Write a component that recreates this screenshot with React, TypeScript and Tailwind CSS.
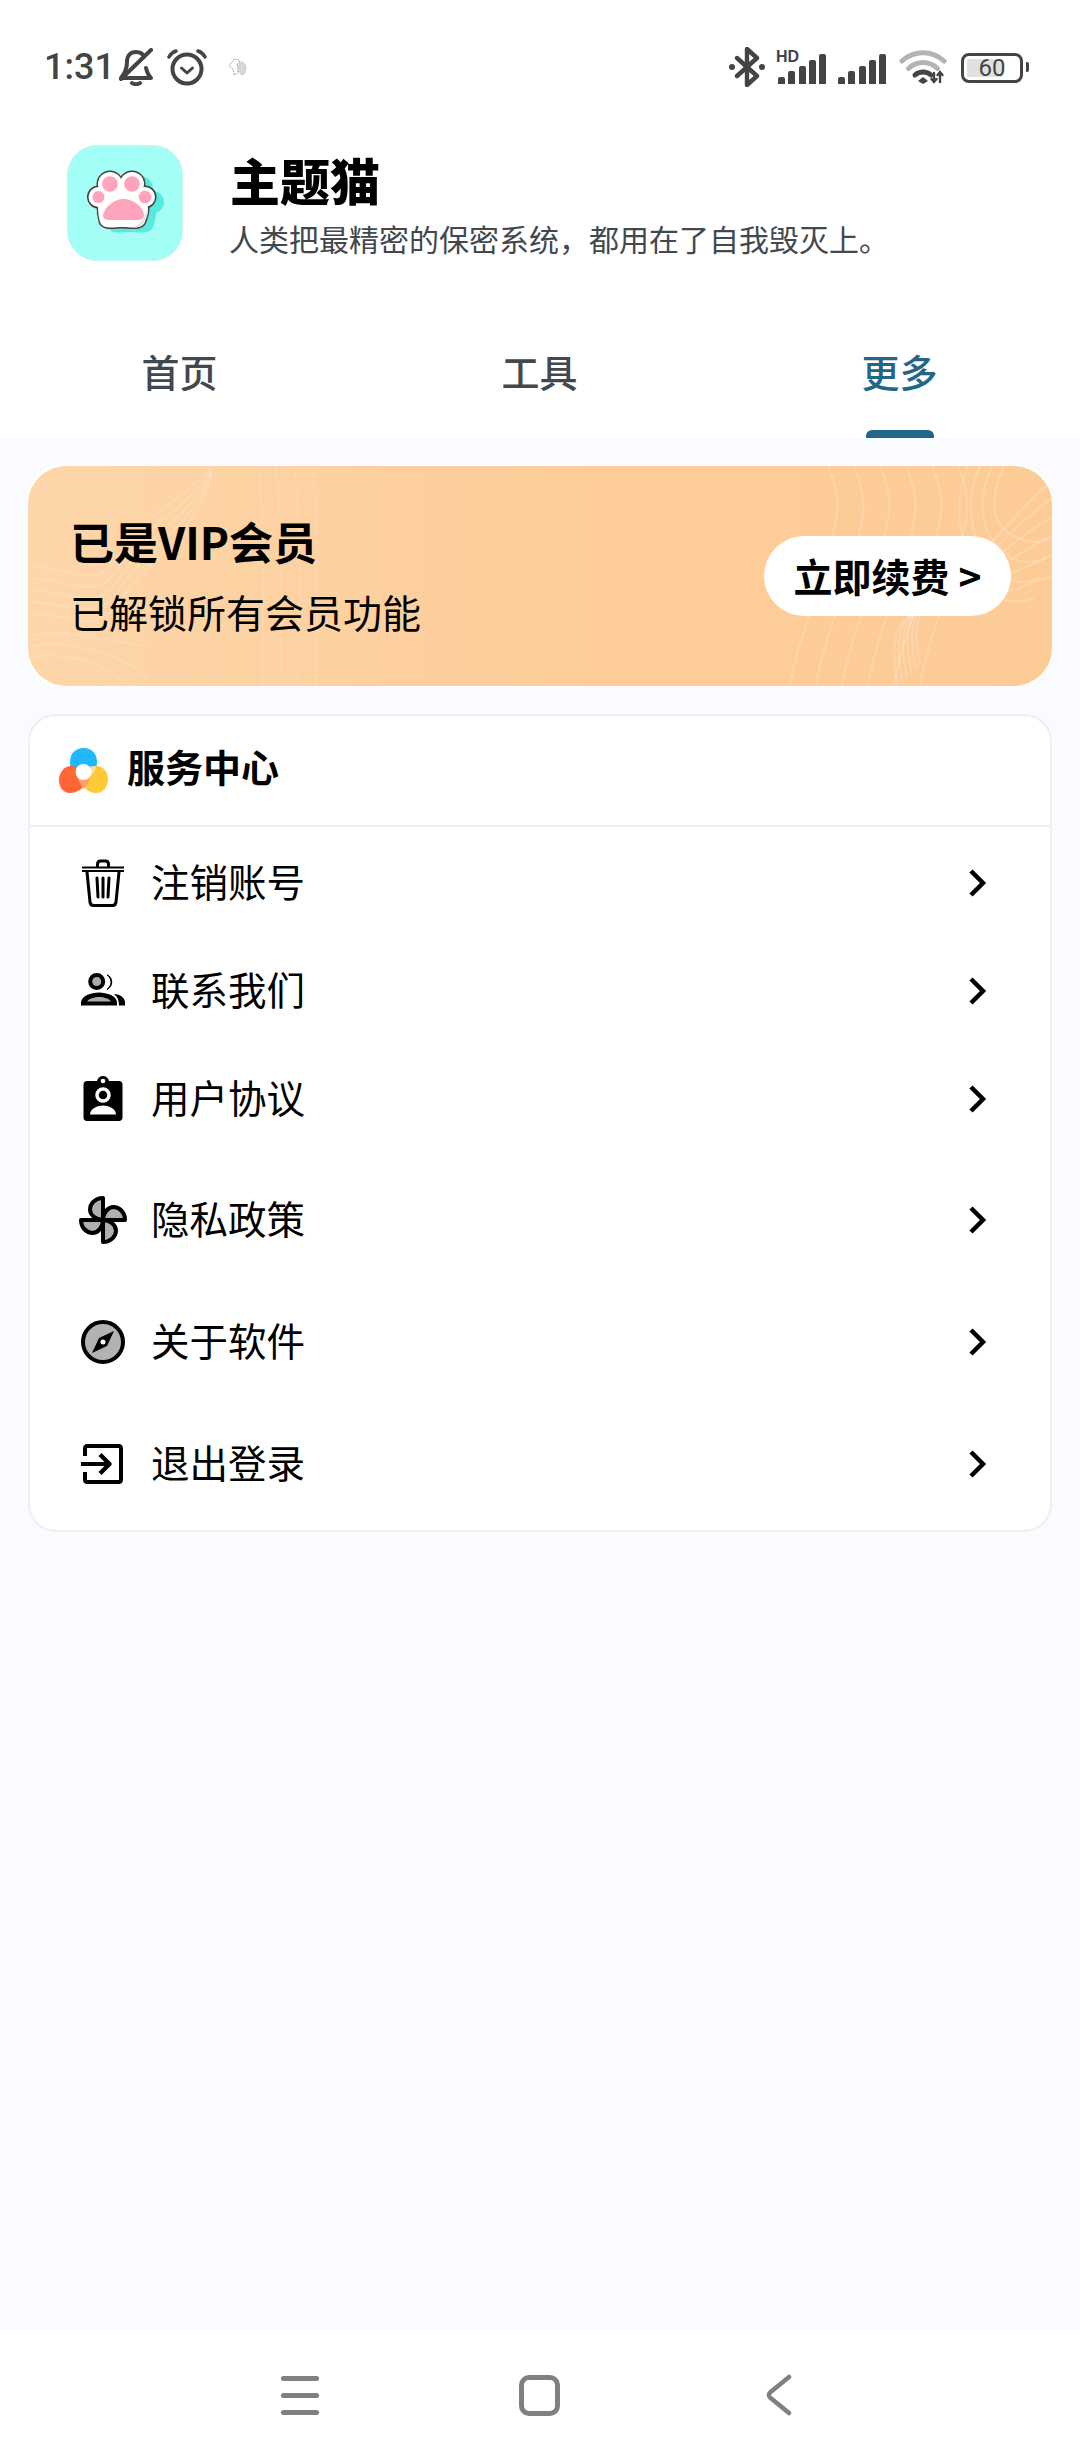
import React from 'react';

const CJK = '[font-family:"Noto_Sans_CJK_SC","Noto_Sans",sans-serif]';

const Signal = () => (
  <div className="h-[30px] w-[48px] flex items-end justify-between">
    {['h-[7px]', 'h-[13px]', 'h-[18px]', 'h-[24px]', 'h-[30px]'].map((h) => (
      <div key={h} className={`${h} w-[7px] bg-[#444] rounded-t-[2px]`} />
    ))}
  </div>
);

const StatusIcons = () => (
  <div className="flex items-center">
    {/* bluetooth */}
    <svg width="36" height="40" viewBox="0 0 36 40" fill="none" stroke="#444" strokeWidth="4.400" strokeLinecap="round" strokeLinejoin="round">
      <path d="M8 11l20 18-10 9V2l10 9L8 29" />
      <circle cx="3" cy="20" r="3" fill="#444" stroke="none" />
      <circle cx="33" cy="20" r="3" fill="#444" stroke="none" />
    </svg>
    <div className="relative w-[48px] h-[30px] ml-[13px] mt-[3px]">
      <span className="absolute left-[-2px] top-[-4px] text-[16px] leading-[14px] font-bold text-[#444] font-['Liberation_Sans',sans-serif]">HD</span>
      <Signal />
    </div>
    <div className="w-[48px] h-[30px] ml-[12px] mt-[3px]">
      <Signal />
    </div>
    {/* wifi */}
    <svg className="ml-[13px]" width="48" height="36" viewBox="0 0 48 36" fill="none" strokeLinecap="round">
      <path d="M3 12C15 1 33 1 45 12" stroke="#b3b3b3" strokeWidth="5" />
      <path d="M9.500 19.500C18 11.500 30 11.500 38.500 19.500" stroke="#b3b3b3" strokeWidth="5" />
      <path d="M16 26C20.500 22 27.500 22 32 26" stroke="#444" strokeWidth="5" />
      <path d="M19 32l5-4 5 4-5 3z" fill="#444" />
      <path d="M35 24v9M32.500 30l2.500 3 2.500-3" stroke="#444" strokeWidth="2.400" />
      <path d="M41 33v-10M38.500 26l2.500-3 2.500 3" stroke="#444" strokeWidth="2.400" />
    </svg>
    {/* battery */}
    <div className="ml-[14px] relative w-[62px] h-[30px] border-[3px] border-[#444] rounded-[8px] flex items-center p-[3px] mt-[1px]">
      <div className="w-[36px] h-full bg-[#e0e0e0] rounded-[2px]" />
      <span className="absolute inset-0 flex items-center justify-center text-[24px] leading-[24px] text-[#444] font-['Roboto',sans-serif]">60</span>
    </div>
    <div className="w-[3px] h-[10px] bg-[#444] rounded-r-[2px] ml-[3px]" />
  </div>
);

const PAW_BODY = 'M30 60C32 46 44 40 54 40C66 40 78 48 80 62C80 70 78 72 77 76C74 84 62 81 54 81C46 81 35 84 32 76C31 72 30 68 30 60Z';

const PawIcon = () => (
  <svg width="115" height="115" viewBox="0 0 115 115">
    <g fill="#55ecdf" transform="translate(8 5)">
      <circle cx="42" cy="38" r="13" />
      <circle cx="64" cy="38" r="13" />
      <circle cx="30" cy="51" r="11" />
      <circle cx="77" cy="51" r="11" />
      <path d={PAW_BODY} />
    </g>
    <g fill="#4a3f3f" stroke="#4a3f3f" strokeWidth="3">
      <circle cx="42" cy="38" r="12" />
      <circle cx="64" cy="38" r="12" />
      <circle cx="30.500" cy="51" r="10" />
      <circle cx="77" cy="51" r="10" />
      <path d={PAW_BODY} />
    </g>
    <g fill="#ffffff">
      <circle cx="42" cy="38" r="12" />
      <circle cx="64" cy="38" r="12" />
      <circle cx="30.500" cy="51" r="10" />
      <circle cx="77" cy="51" r="10" />
      <path d={PAW_BODY} />
    </g>
    <path d="M66 82C72 81 76 79 77 74C79 71 80 67 80 62C78 70 74 76 66 82Z" fill="#e8e2dc" />
    <g fill="#ffa4bd">
      <circle cx="42" cy="38" r="7.800" />
      <circle cx="64" cy="38" r="7.800" />
      <circle cx="30.500" cy="51" r="6" />
      <circle cx="77" cy="51" r="6.300" />
      <path d="M35 69C37 60 47 53 55 53C65 53 75 60 76 69C76 74 71 74 66 74H45C39 74 35 74 35 69Z" />
    </g>
  </svg>
);

const BannerLines = () => (
  <svg className="absolute inset-0" width="1024" height="220" viewBox="0 0 1024 220" fill="none" stroke="#ffffff" strokeOpacity="0.2" strokeWidth="2">
    {[0, 26, 52, 78, 104, 130].map((d) => (
      <path key={`r${d}`} d={`M${800 + d} 0c12 30 12 42 4 72l-14 46c-10 40-24 70-28 102`} />
    ))}
    {[0, 20, 40, 60].map((d) => (
      <path key={`c${d}`} d={`M${976 - d * 0.6} 0c-14 30-16 ${60 + d * 0.5} ${14 + d * 0.3} ${72 + d} c12 6 24 4 34 0`} />
    ))}
    {[0, 22, 44, 66, 88, 110].map((d) => (
      <path key={`b${d}`} d={`M${870 + d * 0.2} ${220 - d * 0.2}c-8-40-4-${68 - d * 0.2} 20-${72 + d * 0.1}c30 4 80-${20 + d * 0.6} 134-${38 + d * 0.7}`} />
    ))}
    {[0, 24, 48, 72, 96].map((d) => (
      <path key={`l${d}`} d={`M0 ${100 + d * 0.5}c40 0 70 ${28 - d * 0.1} 90-10c26-44 72-60 94-${d * 0.4 + 90}`} strokeOpacity="0.14" />
    ))}
    {[0, 22, 44].map((d) => (
      <path key={`m${d}`} d={`M0 ${170 + d * 0.5}c40-10 100 10 120 ${10 + d}`} strokeOpacity="0.14" />
    ))}
    {[0, 18, 36, 54].map((d) => (
      <path key={`v${d}`} d={`M${230 + d} 0c6 50 6 110 4 220`} strokeOpacity="0.1" />
    ))}
  </svg>
);

const LogoIcon = () => (
  <svg width="49" height="46" viewBox="0 0 49 46">
    <path d="M11 14C11 5 17 0 24.500 0C32 0 38 5 38 14C38 22 33 31 24.500 31C16 31 11 22 11 14Z" fill="#1fb9fb" />
    <path d="M12 18C19 18 25 22 26 31C27 40 18 45 11 45C4 45 0 39 0 32C0 25 5 18 12 18Z" fill="#ff6633" />
    <path d="M37 18C30 18 23 23 23 31C23 40 31 46 38 45C45 44 49 38 49 31C49 24 44 18 37 18Z" fill="#ffc837" />
    <path d="M18 29L24 41C28 38 30 34 31 29Z" fill="#ff9d70" />
    <path d="M31 29C34 26 37 22 37 18C34 18 33 18 31 19Z" fill="#f8e0a0" />
    <circle cx="24.500" cy="24" r="8" fill="#ffffff" />
  </svg>
);

const TrashIcon = () => (
  <svg width="48" height="48" viewBox="0 0 48 48" fill="none" stroke="#000" strokeWidth="3" strokeLinecap="round" strokeLinejoin="round">
    <path d="M3 8.500h42M3 12h42" strokeWidth="2.200" strokeLinecap="butt" />
    <path d="M18.500 7V5.500C18.500 3 20 2 21.500 2h5c1.500 0 3 1 3 3.500V7" />
    <path d="M8 13l3 30c0.200 2 1.500 3.500 3.500 3.500h19c2 0 3.300-1.500 3.500-3.500l3-30" />
    <path d="M18 19l1 19M24 19v19M30 19l-1 19" />
  </svg>
);

const PeopleIcon = () => (
  <svg width="48" height="36" viewBox="0 0 48 36">
    <circle cx="17.700" cy="8.500" r="6.500" fill="#aaa" stroke="#000" strokeWidth="4" />
    <path d="M2 32.500v-3C2 23 12 19.500 20 19.500S38 23 38 29.500v3z" fill="#000" />
    <path d="M8 28.500c2-3 7-4.500 12-4.500s10 1.500 12 4.500z" fill="#aaa" />
    <path d="M28 1.800a8 8 0 0 1 0 14.600c2.500-2 4-4.500 4-7.300s-1.500-5.300-4-7.300z" fill="#000" stroke="#000" strokeWidth="1" />
    <path d="M35 21c6 0.500 11 3.500 11 8.500v3h-6c0-5-1.500-9-5-11.500z" fill="#000" />
  </svg>
);

const BadgeIcon = () => (
  <svg width="48" height="48" viewBox="0 0 48 48">
    <path d="M8 6h10c0.500-3 3-5 6-5s5.500 2 6 5h10c2 0 3.500 1.500 3.500 3.500v33c0 2-1.500 3.500-3.500 3.500H8c-2 0-3.500-1.500-3.500-3.500v-33C4.500 7.500 6 6 8 6z" fill="#000" />
    <circle cx="24" cy="6" r="2.300" fill="#fff" />
    <circle cx="24" cy="20" r="6" fill="#000" stroke="#fff" strokeWidth="3.500" />
    <path d="M11 39.500c0-6 8-9 13-9s13 3 13 9z" fill="#fff" />
  </svg>
);

const PinwheelIcon = () => (
  <svg width="48" height="48" viewBox="0 0 48 48" stroke="#000" strokeWidth="4" strokeLinejoin="round">
    <path d="M24 24V2C16 2 11 8 11 13.500S17 24 24 24z" fill="#b0b0b0" />
    <path d="M24 24h22c0-8-6-13-11.500-13S24 17 24 24z" fill="#b0b0b0" />
    <path d="M24 24v22c8 0 13-6 13-11.500S31 24 24 24z" fill="#b0b0b0" />
    <path d="M24 24H2c0 8 6 13 11.500 13S24 31 24 24z" fill="#b0b0b0" />
  </svg>
);

const CompassIcon = () => (
  <svg width="48" height="48" viewBox="0 0 48 48">
    <circle cx="24" cy="24" r="20" fill="#b2b2b2" stroke="#000" strokeWidth="4" />
    <path d="M35 13L28 28 13 35 20 20z" fill="#000" />
    <circle cx="24" cy="24" r="2.500" fill="#fff" />
  </svg>
);

const ExitIcon = () => (
  <svg width="48" height="48" viewBox="0 0 48 48" fill="none" stroke="#000" strokeWidth="4" strokeLinejoin="round">
    <path d="M6 16V8.500C6 7 7 6 8.500 6h31C41 6 42 7 42 8.500v31c0 1.500-1 2.500-2.500 2.500h-31C7 42 6 41 6 39.500V32" />
    <path d="M2 24h26" />
    <path d="M21 14.500l9.500 9.500-9.500 9.500" strokeWidth="4.400" />
  </svg>
);

const rowsTop = [
  { label: '注销账号', icon: <TrashIcon /> },
  { label: '联系我们', icon: <PeopleIcon /> },
  { label: '用户协议', icon: <BadgeIcon /> },
];

const rowsBottom = [
  { label: '隐私政策', icon: <PinwheelIcon /> },
  { label: '关于软件', icon: <CompassIcon /> },
  { label: '退出登录', icon: <ExitIcon /> },
];

const Row = ({ label, icon, tall }: { label: string; icon: React.ReactNode; tall?: boolean }) => (
  <div className={`flex items-center pl-[49px] pr-[63px] ${tall ? 'h-[122px]' : 'h-[108px]'}`}>
    <div className="w-[48px] h-[48px] flex items-center justify-center">{icon}</div>
    <span className="ml-[24px] -mt-[6px] text-[38.500px] leading-[48px] text-black flex-1">{label}</span>
    <svg width="18" height="28" viewBox="0 0 18 28" fill="none" stroke="#000" strokeWidth="4.500">
      <path d="M2 2l12 12L2 26" />
    </svg>
  </div>
);

export default function App() {
  return (
    <div className={`w-[1080px] h-[2460px] flex flex-col bg-[#fafbff] overflow-hidden ${CJK}`}>
      {/* header */}
      <div className="bg-white h-[438px] shrink-0 flex flex-col">
        <div className="h-[136px] shrink-0 pl-[44px] pr-[51px] pt-[45px] flex justify-between items-start">
          <div className="flex items-center h-[44px]">
            <span className="w-[71px] text-[36px] leading-[44px] font-medium text-[#444] font-['Roboto',sans-serif]">1:31</span>
            <svg className="ml-[3px]" width="36" height="38" viewBox="0 0 36 38" fill="none" stroke="#444" strokeWidth="4" strokeLinecap="round" strokeLinejoin="round">
              <path d="M33 2L3 31" />
              <path d="M26 9c-1-3-4-5-8-5-6 0-9 4-9 10 0 7-2 11-6 16h30c-3-3-4-6-5-10" />
              <path d="M14 35c2 1.500 6 1.500 8 0" />
            </svg>
            <svg className="ml-[13px]" width="40" height="38" viewBox="0 0 40 38" fill="none" stroke="#444" strokeLinecap="round" strokeLinejoin="round">
              <circle cx="20" cy="21" r="14.500" strokeWidth="4" />
              <path d="M14.500 20l5.500 5 5.500-5" strokeWidth="3" />
              <path d="M2 9c1.500-3 4-5 7-6M38 9c-1.500-3-4-5-7-6" strokeWidth="3.500" />
            </svg>
            <svg className="ml-[21px]" width="20" height="20" viewBox="0 0 20 20" fill="none">
              <path d="M1 9l5-7 5 1 1 4-3 0 1 4 0 5-4 2-1-6z" stroke="#777" strokeWidth="0.700" strokeDasharray="1.500 1" />
              <path d="M11 5c3-1 6 1 7 5 0 4-1 7-3 8-2 0-4-2-5-5z" fill="#ddd4d4" stroke="#888" strokeWidth="0.500" strokeDasharray="1 1" />
            </svg>
          </div>
          <div className="mt-[2px]">
            <StatusIcons />
          </div>
        </div>
        <div className="flex pl-[67px] h-[177px] shrink-0 items-start pt-[9px]">
          <div className="w-[116px] h-[116px] rounded-[30px] bg-[#a3fff5] border border-[#c9f3ee] shrink-0 overflow-hidden">
            <PawIcon />
          </div>
          <div className="ml-[47px] flex flex-col">
            <span className="text-[50px] leading-[56px] font-black text-black mt-[6px]">主题猫</span>
            <span className="text-[30px] leading-[36px] text-[#41484e] mt-[13px] -ml-[1px]">人类把最精密的保密系统，都用在了自我毁灭上。</span>
          </div>
        </div>
        <div className="flex-1 grid grid-cols-3 text-center">
          <div className="pt-[30px] pr-[1px]"><span className="text-[38px] leading-[56px] font-medium text-[#41484e]">首页</span></div>
          <div className="pt-[30px] pr-[1px]"><span className="text-[38px] leading-[56px] font-medium text-[#41484e]">工具</span></div>
          <div className="pt-[30px] pr-[1px] flex flex-col items-center">
            <span className="text-[38px] leading-[56px] font-medium text-[#226688]">更多</span>
            <div className="mt-auto w-[68px] h-[8px] bg-[#226688] rounded-t-[6px]" />
          </div>
        </div>
      </div>

      {/* VIP banner, white shows in the corners as in the original image */}
      <div className="mx-[28px] mt-[28px] h-[220px] shrink-0 rounded-[32px] bg-white">
        <div className="h-full rounded-[38px] relative overflow-hidden bg-gradient-to-r from-[#fdd6aa] via-[#fdcd9a] to-[#fdcb96] flex items-center justify-between pl-[44px] pr-[41px]">
          <BannerLines />
          <div className="relative flex flex-col -ml-[2px]">
            <span className="text-[44px] leading-[52px] font-bold text-black -mt-[2px]">已是VIP会员</span>
            <span className="text-[39px] leading-[48px] text-black mt-[20px]">已解锁所有会员功能</span>
          </div>
          <div className="relative w-[247px] h-[80px] bg-white rounded-full flex items-center justify-center pb-[2px] text-[39px] leading-[48px] font-bold text-black">
            立即续费 &gt;
          </div>
        </div>
      </div>

      {/* service card */}
      <div className="mx-[28px] mt-[28px] h-[818px] shrink-0 rounded-[28px] bg-white border-2 border-[#eeeff0] flex flex-col">
        <div className="h-[111px] shrink-0 flex items-center pl-[29px] border-b-2 border-[#eeeff0]">
          <LogoIcon />
          <span className="ml-[19px] -mt-[9px] text-[38px] leading-[48px] font-bold text-black">服务中心</span>
        </div>
        <div className="pt-[2px]">
          {rowsTop.map((r) => (
            <Row key={r.label} label={r.label} icon={r.icon} />
          ))}
        </div>
        <div className="pt-[6px]">
          {rowsBottom.map((r) => (
            <Row key={r.label} label={r.label} icon={r.icon} tall />
          ))}
        </div>
      </div>

      <div className="flex-1" />

      {/* nav bar */}
      <div className="h-[130px] shrink-0 bg-white flex items-center pl-[281px]">
        <div className="w-[38px] flex flex-col gap-[12px]">
          <div className="h-[5px] bg-[#808080] rounded-full" />
          <div className="h-[5px] bg-[#808080] rounded-full" />
          <div className="h-[5px] bg-[#808080] rounded-full" />
        </div>
        <div className="ml-[200px] w-[41px] h-[41px] border-[5px] border-[#808080] rounded-[10px]" />
        <svg className="ml-[206px]" width="26" height="42" viewBox="0 0 26 42" fill="none" stroke="#808080" strokeWidth="4.500" strokeLinecap="round" strokeLinejoin="round">
          <path d="M23 3L4 18.500c-1.500 1.500-1.500 3.500 0 5L23 39" />
        </svg>
      </div>
    </div>
  );
}
